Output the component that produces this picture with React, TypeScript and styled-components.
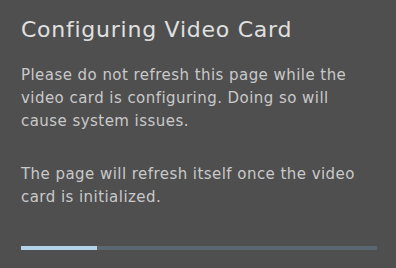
import React from "react";
import styled, { createGlobalStyle } from "styled-components";

const GlobalStyle = createGlobalStyle`
  html, body {
    margin: 0;
    padding: 0;
    background: #4f4f4f;
  }
`;

const Dialog = styled.div`
  width: 396px;
  height: 268px;
  box-sizing: border-box;
  padding: 16px 19px 0 21px;
  background-color: #4f4f4f;
  font-family: "DejaVu Sans", sans-serif;
  display: flex;
  flex-direction: column;
`;

const Title = styled.h1`
  margin: 0;
  font-size: 22px;
  font-weight: 400;
  line-height: 27px;
  letter-spacing: 0.75px;
  color: #e0e0e0;
`;

const Message = styled.p<{ $gap?: number }>`
  margin: ${(p) => p.$gap ?? 0}px 0 0;
  font-size: 15px;
  line-height: 23px;
  letter-spacing: 0.45px;
  color: #c9c9c9;
`;

const Track = styled.div`
  margin-top: 37px;
  width: 356px;
  height: 4px;
  background-color: #5a6672;
  display: flex;
`;

const Fill = styled.div`
  height: 100%;
  background-color: #b3d3ea;
`;

const progress = 21.4;

export default function App() {
  return (
    <>
      <GlobalStyle />
      <Dialog>
        <Title>Configuring Video Card</Title>
        <Message $gap={21}>
          Please do not refresh this page while the video card is configuring.
          Doing so will cause system issues.
        </Message>
        <Message $gap={30}>
          The page will refresh itself once the video card is initialized.
        </Message>
        <Track>
          <Fill style={{ width: `${progress}%` }} />
        </Track>
      </Dialog>
    </>
  );
}
